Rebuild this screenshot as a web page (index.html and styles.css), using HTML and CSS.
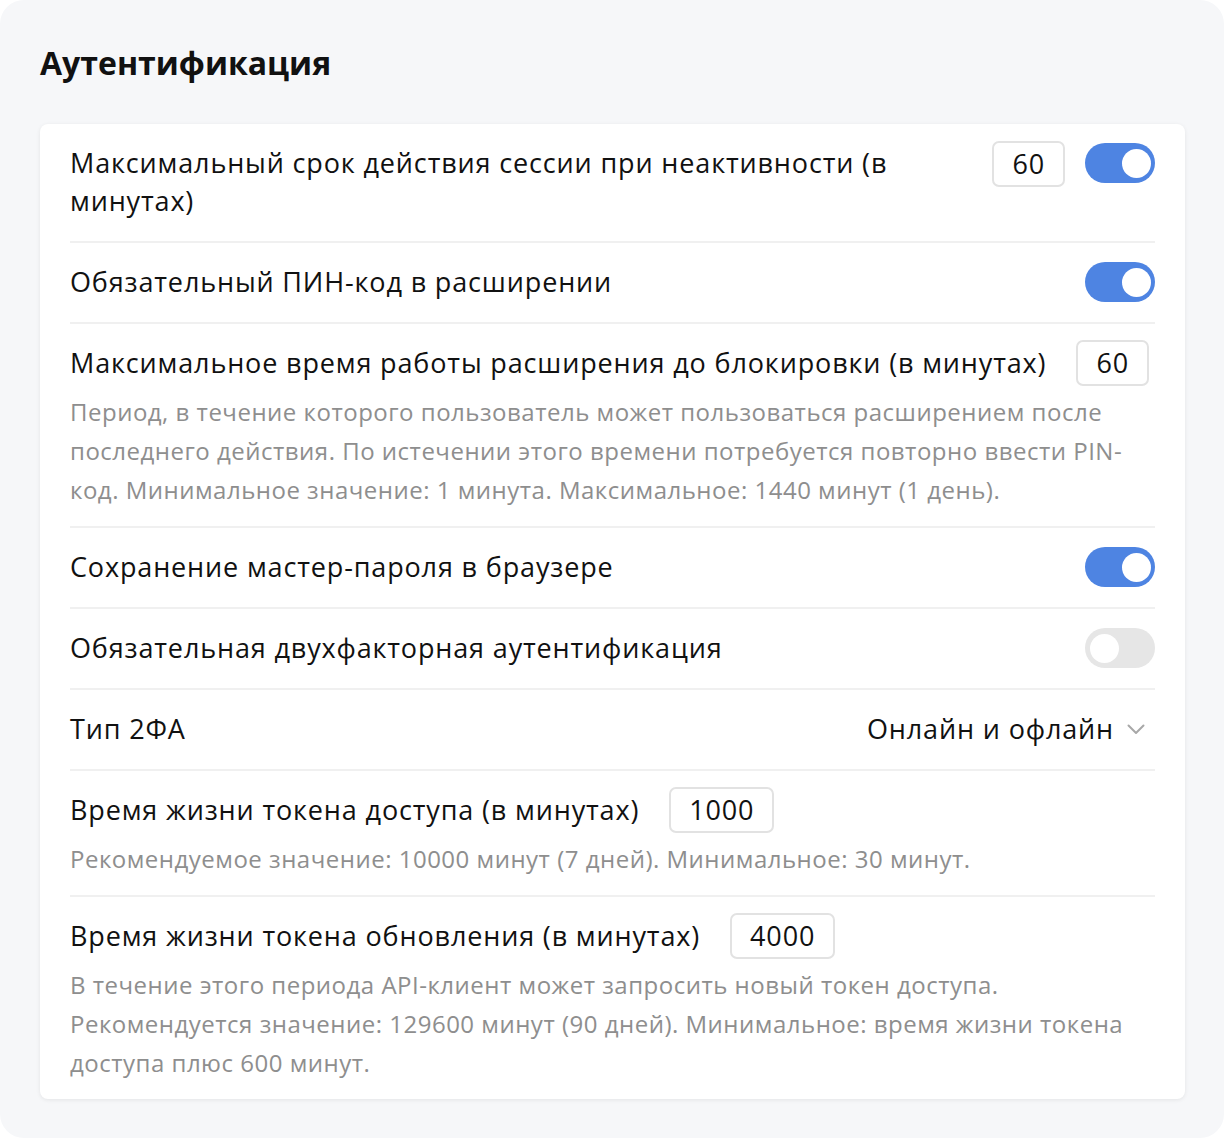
FILE: index.html
```html
<!DOCTYPE html>
<html lang="ru">
<head>
<meta charset="utf-8">
<link rel="stylesheet" href="styles.css">
</head>
<body>
<div class="page">
  <h1 class="title">Аутентификация</h1>
  <div class="card">
    <div class="row">
      <div class="row-main">
        <div class="label grow">Максимальный срок действия сессии при неактивности (в минутах)</div>
        <div class="controls">
          <span class="num">60</span>
          <span class="toggle on"><span class="knob"></span></span>
        </div>
      </div>
    </div>
    <div class="row">
      <div class="row-main">
        <div class="label grow">Обязательный ПИН-код в расширении</div>
        <span class="toggle on"><span class="knob"></span></span>
      </div>
    </div>
    <div class="row with-desc">
      <div class="row-main start">
        <div class="label">Максимальное время работы расширения до блокировки (в минутах)</div>
        <span class="num">60</span>
      </div>
      <p class="desc">Период, в течение которого пользователь может пользоваться расширением после последнего действия. По истечении этого времени потребуется повторно ввести PIN-код. Минимальное значение: 1 минута. Максимальное: 1440 минут (1 день).</p>
    </div>
    <div class="row">
      <div class="row-main">
        <div class="label grow">Сохранение мастер-пароля в браузере</div>
        <span class="toggle on"><span class="knob"></span></span>
      </div>
    </div>
    <div class="row">
      <div class="row-main">
        <div class="label grow">Обязательная двухфакторная аутентификация</div>
        <span class="toggle"><span class="knob"></span></span>
      </div>
    </div>
    <div class="row">
      <div class="row-main">
        <div class="label grow">Тип 2ФА</div>
        <div class="select">Онлайн и офлайн
          <svg class="chev" width="18" height="11" viewBox="0 0 18 11"><path d="M1.5 1.5 L9 9 L16.5 1.5" fill="none" stroke="#a8a8a8" stroke-width="2" stroke-linecap="round" stroke-linejoin="round"/></svg>
        </div>
      </div>
    </div>
    <div class="row with-desc">
      <div class="row-main start">
        <div class="label">Время жизни токена доступа (в минутах)</div>
        <span class="num">1000</span>
      </div>
      <p class="desc">Рекомендуемое значение: 10000 минут (7 дней). Минимальное: 30 минут.</p>
    </div>
    <div class="row last">
      <div class="row-main start">
        <div class="label">Время жизни токена обновления (в минутах)</div>
        <span class="num">4000</span>
      </div>
      <p class="desc">В течение этого периода API-клиент может запросить новый токен доступа. Рекомендуется значение: 129600 минут (90 дней). Минимальное: время жизни токена доступа плюс 600 минут.</p>
    </div>
  </div>
</div>
</body>
</html>
```

FILE: styles.css
```css
html, body {
  margin: 0;
  padding: 0;
  background: #ffffff;
}
body {
  font-family: "Open Sans", "Noto Sans", sans-serif;
  color: #111111;
}
.page {
  width: 1224px;
  height: 1138px;
  box-sizing: border-box;
  background: #f6f7f9;
  border-radius: 24px;
  padding: 40px 39px 0 40px;
}
.title {
  margin: 0 0 38px 0;
  font-size: 32px;
  line-height: 46px;
  font-weight: 700;
  color: #111;
}
.card {
  background: #fff;
  border-radius: 8px;
  box-shadow: 0 1px 4px rgba(0, 0, 0, 0.08);
  padding: 0 30px 17px 30px;
}
.row {
  padding: 20px 0 21px 0;
  border-bottom: 2px solid #f0f0f0;
}
.row.with-desc {
  padding-bottom: 17px;
}
.row.last {
  border-bottom: none;
  padding-bottom: 0;
}
.row-main {
  display: flex;
  align-items: flex-start;
  gap: 30px;
}
.label {
  font-size: 27px;
  line-height: 38px;
  letter-spacing: 0.85px;
}
.grow {
  flex: 1;
}
.controls {
  display: flex;
  align-items: center;
  gap: 20px;
}
.num {
  display: inline-block;
  box-sizing: border-box;
  height: 46px;
  margin: -4px 0;
  padding: 0 18px;
  border: 2px solid #e2e2e2;
  border-radius: 7px;
  font-size: 27px;
  line-height: 42px;
  letter-spacing: 0.85px;
}
.toggle {
  position: relative;
  display: inline-block;
  width: 70px;
  height: 40px;
  border-radius: 20px;
  background: #e6e6e6;
  flex: none;
}
.controls .toggle {
  margin-top: -1px;
}
.row-main > .toggle {
  margin: -1px 0;
}
.toggle.on {
  background: #4e84e2;
}
.knob {
  position: absolute;
  top: 5.5px;
  left: 5px;
  width: 29px;
  height: 29px;
  border-radius: 50%;
  background: #fff;
}
.toggle.on .knob {
  left: auto;
  right: 4px;
}
.select {
  display: flex;
  align-items: center;
  gap: 13px;
  font-size: 27px;
  line-height: 38px;
  letter-spacing: 0.85px;
  padding-right: 10px;
}
.desc {
  margin: 10px 0 0 0;
  font-size: 24px;
  line-height: 39px;
  letter-spacing: 0.5px;
  color: #8e8e8e;
}
```
